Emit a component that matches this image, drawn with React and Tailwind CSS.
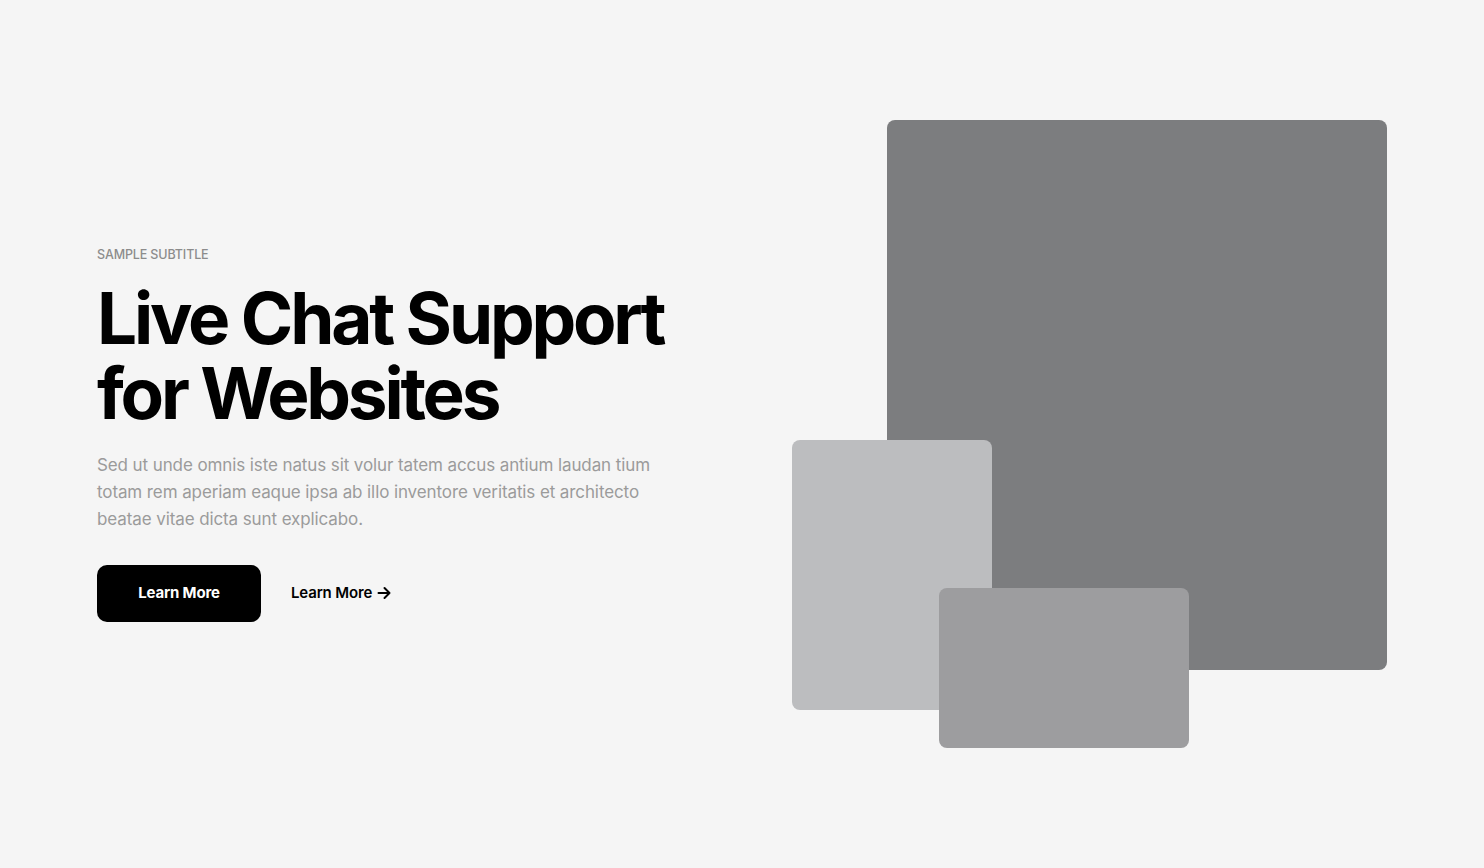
export default function App() {
  return (
    <div className="min-h-screen bg-[#f5f5f5] flex items-center" style={{ fontFamily: "Inter, 'Noto Sans', sans-serif" }}>
      <div className="w-full pl-[97px] pr-[97px] flex items-center justify-between">
        <div className="w-[600px]">
          <p className="text-[12.5px] uppercase text-[#8c8c8c] font-medium tracking-[-0.01em]">Sample Subtitle</p>
          <h1 className="mt-[16px] text-[71px] leading-[75px] font-bold tracking-[-0.045em] text-black">
            Live Chat Support
            <br />
            for Websites
          </h1>
          <p className="mt-[21px] w-[580px] text-[17px] leading-[27px] text-[#9b9b9b] tracking-[-0.006em]">
            Sed ut unde omnis iste natus sit volur tatem accus antium laudan tium totam rem aperiam eaque ipsa ab illo inventore veritatis et architecto beatae vitae dicta sunt explicabo.
          </p>
          <div className="mt-[32px] flex items-center gap-[30px]">
            <button className="w-[164px] h-[57px] rounded-[10px] bg-black text-white text-[15px] font-bold tracking-[-0.01em]">
              Learn More
            </button>
            <a href="#" className="flex items-center gap-[5px] text-[15px] font-semibold text-black tracking-[-0.01em]">
              Learn More
              <svg width="14" height="14" viewBox="0 0 14 14" fill="none" stroke="currentColor" strokeWidth="2" strokeLinecap="round" strokeLinejoin="round">
                <path d="M1.5 7h11M7.5 2l5 5-5 5" />
              </svg>
            </a>
          </div>
        </div>
        <div className="relative w-[595px] h-[628px] shrink-0">
          <div className="absolute left-[95px] top-0 w-[500px] h-[550px] rounded-[8px] bg-[#7c7d7f]" />
          <div className="absolute left-0 top-[320px] w-[200px] h-[270px] rounded-[8px] bg-[#bcbdbf]" />
          <div className="absolute left-[147px] top-[468px] w-[250px] h-[160px] rounded-[8px] bg-[#9d9d9f]" />
        </div>
      </div>
    </div>
  );
}
